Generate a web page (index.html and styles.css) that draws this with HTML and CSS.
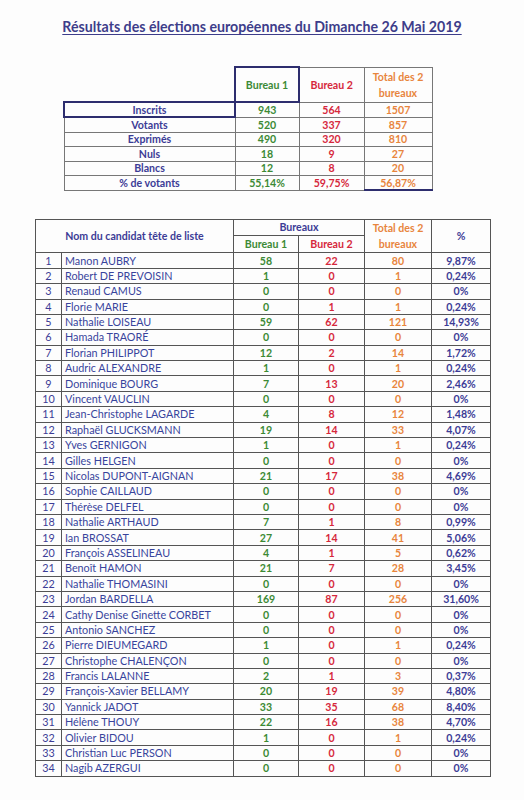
FILE: index.html
```html
<!DOCTYPE html>
<html lang="fr">
<head>
<meta charset="utf-8">
<title>Résultats des élections européennes</title>
<link rel="stylesheet" href="styles.css">
</head>
<body>
<h1 class="title">Résultats des élections européennes du Dimanche 26 Mai 2019</h1>

<table class="summary">
  <colgroup><col class="c-label"><col class="c-num"><col class="c-num2"><col class="c-tot"></colgroup>
  <tr class="head">
    <td class="blank"></td>
    <th class="g b1-head">Bureau 1</th>
    <th class="r">Bureau 2</th>
    <th class="o">Total des 2<br>bureaux</th>
  </tr>
  <tr><th class="lbl inscrits">Inscrits</th><td class="g">943</td><td class="r">564</td><td class="o">1507</td></tr>
  <tr><th class="lbl">Votants</th><td class="g">520</td><td class="r">337</td><td class="o">857</td></tr>
  <tr><th class="lbl">Exprimés</th><td class="g">490</td><td class="r">320</td><td class="o">810</td></tr>
  <tr><th class="lbl">Nuls</th><td class="g">18</td><td class="r">9</td><td class="o">27</td></tr>
  <tr><th class="lbl">Blancs</th><td class="g">12</td><td class="r">8</td><td class="o">20</td></tr>
  <tr><th class="lbl">% de votants</th><td class="g">55,14%</td><td class="r">59,75%</td><td class="o last">56,87%</td></tr>
</table>

<table class="results">
  <colgroup><col class="c-n"><col class="c-name"><col class="c-b1"><col class="c-b2"><col class="c-t"><col class="c-p"></colgroup>
  <thead>
    <tr class="h1">
      <th colspan="2" rowspan="2" class="b">Nom du candidat tête de liste</th>
      <th colspan="2" class="b">Bureaux</th>
      <th rowspan="2" class="o">Total des 2<br>bureaux</th>
      <th rowspan="2" class="b">%</th>
    </tr>
    <tr class="h2">
      <th class="g">Bureau 1</th>
      <th class="r">Bureau 2</th>
    </tr>
  </thead>
  <tbody>
    <tr><td class="n">1</td><td class="nm">Manon AUBRY</td><td class="g">58</td><td class="r">22</td><td class="o">80</td><td class="p">9,87%</td></tr>
    <tr><td class="n">2</td><td class="nm">Robert DE PREVOISIN</td><td class="g">1</td><td class="r">0</td><td class="o">1</td><td class="p">0,24%</td></tr>
    <tr><td class="n">3</td><td class="nm">Renaud CAMUS</td><td class="g">0</td><td class="r">0</td><td class="o">0</td><td class="p">0%</td></tr>
    <tr><td class="n">4</td><td class="nm">Florie MARIE</td><td class="g">0</td><td class="r">1</td><td class="o">1</td><td class="p">0,24%</td></tr>
    <tr><td class="n">5</td><td class="nm">Nathalie LOISEAU</td><td class="g">59</td><td class="r">62</td><td class="o">121</td><td class="p">14,93%</td></tr>
    <tr><td class="n">6</td><td class="nm">Hamada TRAORÉ</td><td class="g">0</td><td class="r">0</td><td class="o">0</td><td class="p">0%</td></tr>
    <tr><td class="n">7</td><td class="nm">Florian PHILIPPOT</td><td class="g">12</td><td class="r">2</td><td class="o">14</td><td class="p">1,72%</td></tr>
    <tr><td class="n">8</td><td class="nm">Audric ALEXANDRE</td><td class="g">1</td><td class="r">0</td><td class="o">1</td><td class="p">0,24%</td></tr>
    <tr><td class="n">9</td><td class="nm">Dominique BOURG</td><td class="g">7</td><td class="r">13</td><td class="o">20</td><td class="p">2,46%</td></tr>
    <tr><td class="n">10</td><td class="nm">Vincent VAUCLIN</td><td class="g">0</td><td class="r">0</td><td class="o">0</td><td class="p">0%</td></tr>
    <tr><td class="n">11</td><td class="nm">Jean-Christophe LAGARDE</td><td class="g">4</td><td class="r">8</td><td class="o">12</td><td class="p">1,48%</td></tr>
    <tr><td class="n">12</td><td class="nm">Raphaël GLUCKSMANN</td><td class="g">19</td><td class="r">14</td><td class="o">33</td><td class="p">4,07%</td></tr>
    <tr><td class="n">13</td><td class="nm">Yves GERNIGON</td><td class="g">1</td><td class="r">0</td><td class="o">1</td><td class="p">0,24%</td></tr>
    <tr><td class="n">14</td><td class="nm">Gilles HELGEN</td><td class="g">0</td><td class="r">0</td><td class="o">0</td><td class="p">0%</td></tr>
    <tr><td class="n">15</td><td class="nm">Nicolas DUPONT-AIGNAN</td><td class="g">21</td><td class="r">17</td><td class="o">38</td><td class="p">4,69%</td></tr>
    <tr><td class="n">16</td><td class="nm">Sophie CAILLAUD</td><td class="g">0</td><td class="r">0</td><td class="o">0</td><td class="p">0%</td></tr>
    <tr><td class="n">17</td><td class="nm">Thérèse DELFEL</td><td class="g">0</td><td class="r">0</td><td class="o">0</td><td class="p">0%</td></tr>
    <tr><td class="n">18</td><td class="nm">Nathalie ARTHAUD</td><td class="g">7</td><td class="r">1</td><td class="o">8</td><td class="p">0,99%</td></tr>
    <tr><td class="n">19</td><td class="nm">Ian BROSSAT</td><td class="g">27</td><td class="r">14</td><td class="o">41</td><td class="p">5,06%</td></tr>
    <tr><td class="n">20</td><td class="nm">François ASSELINEAU</td><td class="g">4</td><td class="r">1</td><td class="o">5</td><td class="p">0,62%</td></tr>
    <tr><td class="n">21</td><td class="nm">Benoît HAMON</td><td class="g">21</td><td class="r">7</td><td class="o">28</td><td class="p">3,45%</td></tr>
    <tr><td class="n">22</td><td class="nm">Nathalie THOMASINI</td><td class="g">0</td><td class="r">0</td><td class="o">0</td><td class="p">0%</td></tr>
    <tr><td class="n">23</td><td class="nm">Jordan BARDELLA</td><td class="g">169</td><td class="r">87</td><td class="o">256</td><td class="p">31,60%</td></tr>
    <tr><td class="n">24</td><td class="nm">Cathy Denise Ginette CORBET</td><td class="g">0</td><td class="r">0</td><td class="o">0</td><td class="p">0%</td></tr>
    <tr><td class="n">25</td><td class="nm">Antonio SANCHEZ</td><td class="g">0</td><td class="r">0</td><td class="o">0</td><td class="p">0%</td></tr>
    <tr><td class="n">26</td><td class="nm">Pierre DIEUMEGARD</td><td class="g">1</td><td class="r">0</td><td class="o">1</td><td class="p">0,24%</td></tr>
    <tr><td class="n">27</td><td class="nm">Christophe CHALENÇON</td><td class="g">0</td><td class="r">0</td><td class="o">0</td><td class="p">0%</td></tr>
    <tr><td class="n">28</td><td class="nm">Francis LALANNE</td><td class="g">2</td><td class="r">1</td><td class="o">3</td><td class="p">0,37%</td></tr>
    <tr><td class="n">29</td><td class="nm">François-Xavier BELLAMY</td><td class="g">20</td><td class="r">19</td><td class="o">39</td><td class="p">4,80%</td></tr>
    <tr><td class="n">30</td><td class="nm">Yannick JADOT</td><td class="g">33</td><td class="r">35</td><td class="o">68</td><td class="p">8,40%</td></tr>
    <tr><td class="n">31</td><td class="nm">Hélène THOUY</td><td class="g">22</td><td class="r">16</td><td class="o">38</td><td class="p">4,70%</td></tr>
    <tr><td class="n">32</td><td class="nm">Olivier BIDOU</td><td class="g">1</td><td class="r">0</td><td class="o">1</td><td class="p">0,24%</td></tr>
    <tr><td class="n">33</td><td class="nm">Christian Luc PERSON</td><td class="g">0</td><td class="r">0</td><td class="o">0</td><td class="p">0%</td></tr>
    <tr><td class="n">34</td><td class="nm">Nagib AZERGUI</td><td class="g">0</td><td class="r">0</td><td class="o">0</td><td class="p">0%</td></tr>
  </tbody>
</table>
</body>
</html>
```

FILE: styles.css
```css
html, body {
  margin: 0;
  padding: 0;
  background: #fdfdfd;
}
body {
  font-family: Lato, "Open Sans", sans-serif;
  color: #3c3c96;
  width: 524px;
  height: 800px;
  overflow: hidden;
}
.title {
  margin: 18px 0 0 0;
  text-align: center;
  font-size: 14.2px;
  line-height: 17px;
  font-weight: 700;
  color: #3d3d8a;
  text-decoration: underline;
  text-underline-offset: 2px;
  text-decoration-thickness: 1px;
}

table {
  border-collapse: collapse;
  table-layout: fixed;
}
th, td {
  padding: 0;
  text-align: center;
  font-size: 10.6px;
  font-weight: 700;
  white-space: nowrap;
}
.g { color: #3c8a35; }
.r { color: #d6283c; }
.o { color: #e8853d; }
.b { color: #3c3c96; }

/* summary table */
.summary {
  margin: 31px 0 0 63px;
}
.summary .c-label { width: 171px; }
.summary .c-num { width: 64px; }
.summary .c-num2 { width: 65px; }
.summary .c-tot { width: 68px; }
.summary td, .summary th {
  border: 1px solid #777;
  height: 13.4px;
  line-height: 12px;
}
.summary .head th {
  height: 33px;
  line-height: 16px;
}
.summary .blank {
  border-top: none;
  border-left: none;
  border-bottom: 2px solid #2d2d6e;
}
.summary .b1-head {
  border: 2px solid #2d2d6e;
}
.summary .lbl {
  color: #3c3c96;
}
.summary .inscrits {
  border: 2px solid #2d2d6e;
}
.summary .last {
  border-bottom: 2px solid #2d2d6e;
}

/* results table */
.results {
  margin: 28px 0 0 35px;
  border: 1.5px solid #444;
}
.results .c-n { width: 26px; }
.results .c-name { width: 172px; }
.results .c-b1 { width: 65px; }
.results .c-b2 { width: 66px; }
.results .c-t { width: 67px; }
.results .c-p { width: 59px; }
.results th, .results td {
  border: 1px solid #555;
}
.results .h1 th {
  height: 15px;
  line-height: 15px;
}
.results .h2 th {
  height: 16px;
  line-height: 16px;
}
.results .h1 th[rowspan] {
  line-height: 16px;
}
.results tbody td {
  height: 14.4px;
  line-height: 12px;
}
.results .n {
  font-weight: 400;
  font-size: 10.8px;
  color: #3c3c96;
}
.results .nm {
  text-align: left;
  padding-left: 3px;
  font-weight: 400;
  font-size: 10.8px;
  color: #38449c;
  border-left-color: #3c46a0;
}
.results .p {
  color: #3c3c96;
}
```
